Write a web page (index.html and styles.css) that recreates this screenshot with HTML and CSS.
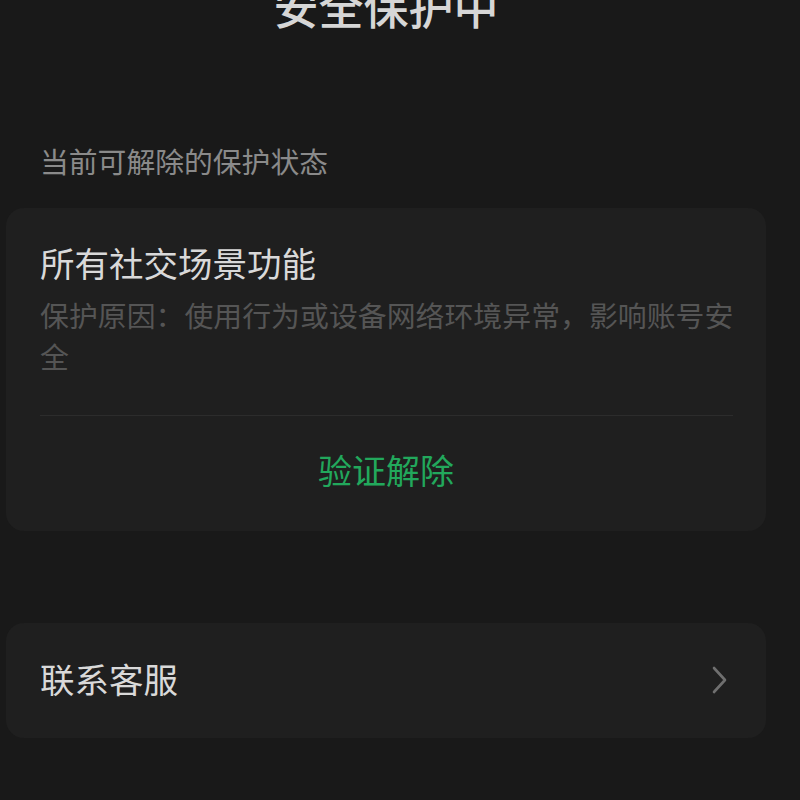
FILE: index.html
```html
<!DOCTYPE html>
<html lang="zh-CN">
<head>
<meta charset="utf-8">
<link rel="stylesheet" href="styles.css">
</head>
<body>
<div class="page">
  <h1 class="title">安全保护中</h1>
  <div class="section-label">当前可解除的保护状态</div>
  <div class="card">
    <div class="card-body">
      <div class="item-title">所有社交场景功能</div>
      <div class="item-desc">保护原因：使用行为或设备网络环境异常，影响账号安全</div>
    </div>
    <div class="divider"></div>
    <div class="action">验证解除</div>
  </div>
  <div class="card row">
    <span class="row-label">联系客服</span>
    <svg class="chevron" width="18" height="28" viewBox="0 0 18 28"><path d="M3 2 L14 14 L3 26" fill="none" stroke="#6f6f6f" stroke-width="2.6" stroke-linecap="round" stroke-linejoin="round"/></svg>
  </div>
</div>
</body>
</html>
```

FILE: styles.css
```css
html, body {
  margin: 0;
  padding: 0;
  background: #191919;
  height: 100%;
  overflow: hidden;
}
body {
  font-family: "Noto Sans CJK SC", "Noto Sans", sans-serif;
}
.page {
  width: 760px;
  margin-left: 6px;
}
.title {
  margin: -22px 0 0 0;
  font-size: 45px;
  line-height: 56px;
  font-weight: 500;
  color: #d6d6d6;
  text-align: center;
}
.section-label {
  margin-top: 107px;
  padding-left: 34px;
  font-size: 28.8px;
  line-height: 40px;
  color: #8a8a8a;
}
.card {
  background: #1f1f1f;
  border-radius: 18px;
}
.section-label + .card {
  margin-top: 27px;
}
.card-body {
  padding: 34px 28px 0 34px;
}
.item-title {
  font-size: 34.5px;
  line-height: 40px;
  color: #d9d9d9;
}
.item-desc {
  margin-top: 12px;
  font-size: 28.9px;
  line-height: 41px;
  color: #555555;
}
.divider {
  margin: 39px 33px 0 34px;
  height: 1px;
  background: #2c2c2c;
}
.action {
  padding: 34px 0 41px;
  text-align: center;
  font-size: 34px;
  line-height: 40px;
  color: #22a85c;
}
.row {
  margin-top: 92px;
  height: 115px;
  box-sizing: border-box;
  display: flex;
  align-items: center;
  justify-content: space-between;
  padding: 0 37px 6px 34px;
}
.row-label {
  font-size: 34.5px;
  line-height: 40px;
  color: #d9d9d9;
}
.chevron {
  display: block;
  margin-top: 4px;
}
```
